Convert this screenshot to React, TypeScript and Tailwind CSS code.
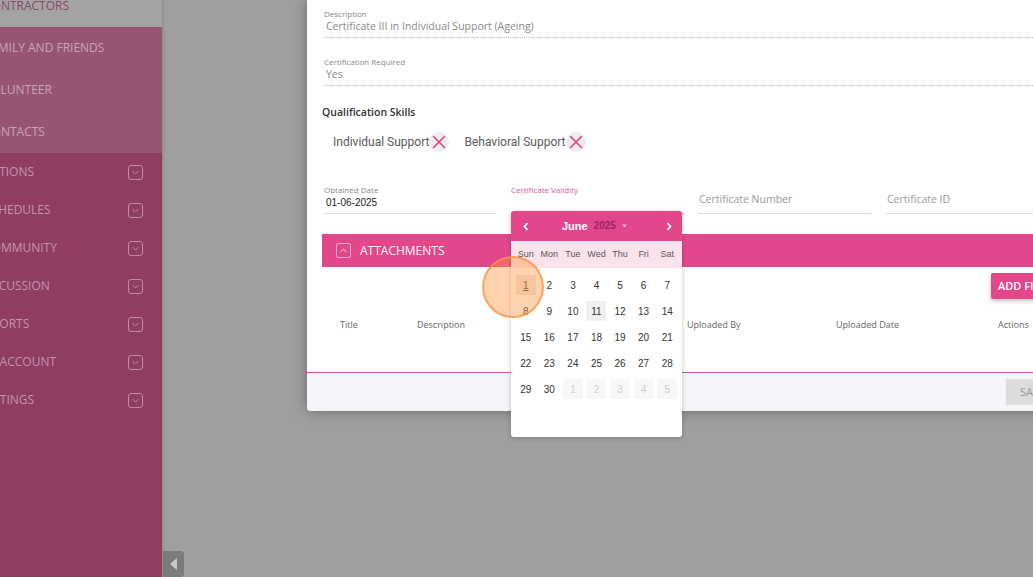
import React from "react";

const sideTop = [
  { label: "CONTRACTORS", active: true, off: "ml-[-16px]" },
  { label: "FAMILY AND FRIENDS", off: "ml-[-16px]" },
  { label: "VOLUNTEER", off: "ml-[-16px]" },
  { label: "CONTACTS", off: "ml-[-16px]" },
];
const sideBottom = [
  { label: "ACTIONS", off: "ml-[-16px]" },
  { label: "SCHEDULES", off: "ml-[-16px]" },
  { label: "COMMUNITY", off: "ml-[-16px]" },
  { label: "DISCUSSION", off: "ml-[-20px]" },
  { label: "REPORTS", off: "ml-[-22px]" },
  { label: "MY ACCOUNT", off: "ml-[-21px]" },
  { label: "SETTINGS", off: "ml-[-20px]" },
];

function ChevBox() {
  return (
    <svg width="15" height="15" viewBox="0 0 15 15" fill="none">
      <rect x="0.5" y="0.5" width="14" height="14" rx="2.5" stroke="#c48aa7" strokeWidth="1" />
      <path d="M4.8 6.3 L7.5 9 L10.2 6.3" stroke="#c48aa7" strokeWidth="1" strokeLinecap="round" strokeLinejoin="round" />
    </svg>
  );
}

function XIcon() {
  return (
    <span className="w-[20px] h-[20px] rounded-full bg-[#ededed] flex items-center justify-center">
      <svg width="14" height="14" viewBox="0 0 14 14">
        <path d="M1.5 1.5 L12.5 12.5 M12.5 1.5 L1.5 12.5" stroke="#e0447f" strokeWidth="1.6" strokeLinecap="round" />
      </svg>
    </span>
  );
}

const weeks: { d: number; other?: boolean }[][] = [
  [1, 2, 3, 4, 5, 6, 7].map((d) => ({ d })),
  [8, 9, 10, 11, 12, 13, 14].map((d) => ({ d })),
  [15, 16, 17, 18, 19, 20, 21].map((d) => ({ d })),
  [22, 23, 24, 25, 26, 27, 28].map((d) => ({ d })),
  [{ d: 29 }, { d: 30 }, { d: 1, other: true }, { d: 2, other: true }, { d: 3, other: true }, { d: 4, other: true }, { d: 5, other: true }],
];

function Calendar() {
  return (
    <div className="absolute left-0 top-[26px] w-[171px] h-[226px] bg-white rounded-[3px] shadow-[0_1px_5px_rgba(0,0,0,0.22)] z-20 overflow-hidden font-['Liberation_Sans',Arial,sans-serif]">
      <div className="h-[30px] bg-[#e4468c] flex items-center relative">
        <svg className="absolute left-[12px] top-[11px]" width="6" height="9" viewBox="0 0 6 9">
          <path d="M4.5 1 L1.5 4.5 L4.5 8" stroke="#fff" strokeWidth="1.8" fill="none" />
        </svg>
        <div className="absolute left-[51px] top-[8px] flex items-center">
          <span className="text-[11px] font-bold text-white leading-[14px]">June</span>
          <span className="ml-[6px] text-[10px] font-bold text-[#9a2560] leading-[14px]">2025</span>
          <svg className="ml-[6px]" width="5" height="4" viewBox="0 0 5 4">
            <path d="M0 0.5 L5 0.5 L2.5 3.5 Z" fill="#f3b3cf" />
          </svg>
        </div>
        <svg className="absolute left-[155px] top-[11px]" width="6" height="9" viewBox="0 0 6 9">
          <path d="M1.5 1 L4.5 4.5 L1.5 8" stroke="#fff" strokeWidth="1.8" fill="none" />
        </svg>
      </div>
      <div className="h-[27px] bg-[#fbe3ee] px-[3px] grid grid-cols-7 items-center">
        {["Sun", "Mon", "Tue", "Wed", "Thu", "Fri", "Sat"].map((d) => (
          <span key={d} className="text-[9px] text-[#555] text-center">{d}</span>
        ))}
      </div>
      <div className="pt-[4px] px-[3px]">
        {weeks.map((w, i) => (
          <div key={i} className="h-[26px] grid grid-cols-7">
            {w.map((c, j) => {
              const isSel = i === 0 && j === 0;
              const isToday = !c.other && c.d === 11;
              return (
                <div key={j} className="flex items-center justify-center">
                  <span
                    className={
                      "w-[20px] h-[20px] flex items-center justify-center text-[10px] " +
                      (c.other
                        ? "text-[#cfcfcf] bg-[#f7f7f7]"
                        : isSel
                        ? "text-[#444] bg-[#efe7e7] underline"
                        : isToday
                        ? "text-[#333] bg-[#f0f0f0]"
                        : "text-[#333]")
                    }
                  >
                    {c.d}
                  </span>
                </div>
              );
            })}
          </div>
        ))}
      </div>
    </div>
  );
}

export default function App() {
  return (
    <div className="w-[1033px] h-[577px] overflow-hidden flex bg-[#9f9f9f] relative font-['Open_Sans',sans-serif]">
      {/* Sidebar */}
      <aside className="w-[162px] h-full bg-[#8f3d63] flex flex-col overflow-hidden shrink-0 relative z-10 shadow-[1px_0_3px_rgba(0,0,0,0.15)]">
        <div className="mt-[-15px]">
          {sideTop.map((s) => (
            <div
              key={s.label}
              className={
                "h-[42px] flex items-center whitespace-nowrap overflow-hidden " +
                (s.active ? "bg-[#a3a3a3] text-[#8b4567]" : "bg-[#965574] text-[#c9a3b6]")
              }
            >
              <span className={s.off + " text-[12px]"}>{s.label}</span>
            </div>
          ))}
        </div>
        {sideBottom.map((s) => (
          <div key={s.label} className="h-[38px] flex items-center justify-between whitespace-nowrap pr-[19px] text-[#c595ad]">
            <span className={s.off + " text-[12px]"}>{s.label}</span>
            <ChevBox />
          </div>
        ))}
      </aside>

      {/* Main */}
      <main className="flex-1 relative">
        <div className="ml-[145px] w-[780px] h-[411px] bg-white rounded-b-[4px] shadow-[0_0_14px_rgba(0,0,0,0.35)] flex flex-col">
          <div className="flex-1 pl-[15px] pt-[9px]">
            <div className="ml-[2px] border-b border-dotted border-[#b8b8b8] pb-[4px]">
              <div className="text-[8px] leading-[10px] text-[#888]">Description</div>
              <div className="pl-[2px] text-[10.5px] leading-[14px] text-[#8a8a8a]">Certificate III in Individual Support (Ageing)</div>
            </div>
            <div className="ml-[2px] mt-[19px] border-b border-dotted border-[#b8b8b8] pb-[4px]">
              <div className="text-[8px] leading-[10px] text-[#888]">Certification Required</div>
              <div className="pl-[2px] text-[10.5px] leading-[14px] text-[#8a8a8a]">Yes</div>
            </div>
            <div className="mt-[19px] text-[10.5px] leading-[14px] font-semibold text-[#333]">Qualification Skills</div>
            <div className="mt-[11px] h-[24px] flex items-center pl-[11px] font-['Roboto',sans-serif] text-[12px] text-[#5a5a5a]">
              <span>Individual Support</span>
              <XIcon />
              <span className="ml-[15px]">Behavioral Support</span>
              <XIcon />
            </div>
            <div className="mt-[31px] ml-[2px] flex gap-[15px]">
              <div className="w-[172px] border-b border-[#dcdcdc] pb-[3px]">
                <div className="text-[8px] leading-[10px] text-[#888]">Obtained Date</div>
                <div className="pl-[2px] h-[15px] text-[10px] leading-[15px] text-[#222] font-['Liberation_Sans',Arial,sans-serif]">01-06-2025</div>
              </div>
              <div className="w-[172px] border-b border-[#e4468c] pb-[3px] relative">
                <div className="text-[8px] leading-[10px] text-[#d8559a]">Certificate Validity</div>
                <div className="h-[15px]" />
                <Calendar />
              </div>
              <div className="w-[173px] border-b border-[#dcdcdc] pb-[3px] flex items-center pt-[4px]">
                <span className="pl-[1px] text-[10.5px] text-[#999]">Certificate Number</span>
              </div>
              <div className="w-[180px] border-b border-[#dcdcdc] pb-[3px] flex items-center pt-[4px]">
                <span className="pl-[1px] text-[10.5px] text-[#999]">Certificate ID</span>
              </div>
            </div>

            <div className="mt-[20px] h-[33px] bg-[#e4468c] flex items-center pl-[14px]">
              <svg width="15" height="15" viewBox="0 0 15 15" fill="none">
                <rect x="0.5" y="0.5" width="14" height="14" rx="2" stroke="rgba(255,255,255,0.55)" />
                <path d="M4.8 8.8 L7.5 6.1 L10.2 8.8" stroke="rgba(255,255,255,0.75)" strokeWidth="1" strokeLinecap="round" strokeLinejoin="round" />
              </svg>
              <span className="ml-[9px] text-[12px] text-white">ATTACHMENTS</span>
            </div>
            <div className="h-[105px] flex flex-col">
              <div className="mt-[5px] ml-[669px]">
                <button className="h-[26px] px-[7px] bg-[#e4468c] text-white text-[11px] font-semibold rounded-[2px] shadow-[0_2px_4px_rgba(0,0,0,0.25)] whitespace-nowrap">
                  ADD FILE
                </button>
              </div>
              <div className="mt-[19px] pl-[18px] grid grid-cols-[77px_270px_149px_162px_1fr] text-[9px] text-[#666]">
                <span>Title</span>
                <span>Description</span>
                <span>Uploaded By</span>
                <span>Uploaded Date</span>
                <span>Actions</span>
              </div>
            </div>
          </div>
          <div className="h-[39px] border-t border-[#d2579a] bg-[#f4f5f8] rounded-b-[4px] flex items-center justify-end pr-[21px]">
            <button className="w-[60px] h-[26px] bg-[#dcdcdc] text-[#999] text-[11px] text-left pl-[14px]">SAVE</button>
          </div>
        </div>

        <div className="absolute left-[1px] top-[551px] w-[21px] h-[26px] bg-[#7b7b7b] rounded-tr-[3px] rounded-br-[3px] flex items-center justify-center">
          <svg width="9" height="14" viewBox="0 0 9 14">
            <path d="M8 1 L1 7 L8 13 Z" fill="#c9c9c9" />
          </svg>
        </div>
      </main>

      {/* click indicator */}
      <div className="absolute left-[482px] top-[256px] w-[62px] h-[62px] rounded-full bg-[rgba(255,150,60,0.42)] border-2 border-[rgba(245,150,70,0.75)] z-30 pointer-events-none" />
    </div>
  );
}
